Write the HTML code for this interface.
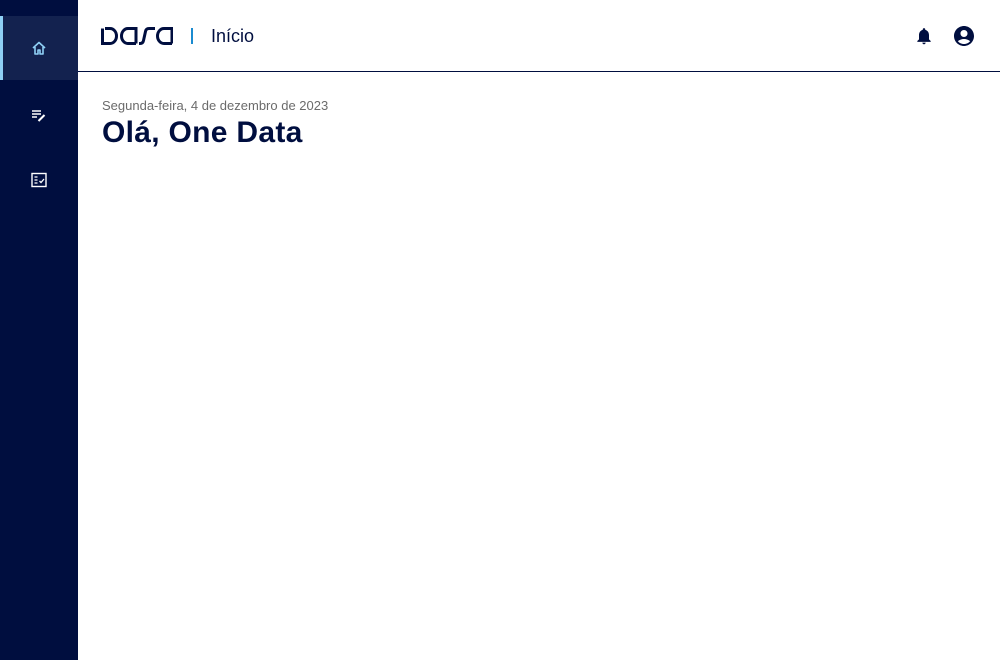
<!DOCTYPE html>
<html><head><meta charset="utf-8"><style>
*{margin:0;padding:0;box-sizing:border-box}
body{width:1000px;height:660px;background:#fff;font-family:"Liberation Sans",sans-serif;position:relative;overflow:hidden}
.side{position:absolute;left:0;top:0;width:78px;height:660px;background:#000e3f}
.act{position:absolute;left:0;top:16px;width:78px;height:64px;background:#13224f;border-left:3px solid #8fd0f5}
.hdr{position:absolute;left:78px;top:0;right:0;height:72px;border-bottom:1.5px solid #000e3f}
.ic{position:absolute}
</style></head><body>
<div class="side"></div>
<div class="act"></div>
<svg class="ic" style="left:31px;top:40px" width="16" height="16" viewBox="0 0 16 16"><path d="M2 8 L8 2.5 L14 8 M4 7 V14 H7 V10 H9 V14 H12 V7" fill="none" stroke="#8fd0f5" stroke-width="1.6" stroke-linejoin="round"/></svg>
<svg class="ic" style="left:31px;top:107px" width="16" height="16" viewBox="0 0 16 16"><path d="M1 4H10M1 7H10M1 10H6" stroke="#fff" stroke-width="1.5"/><path d="M7.5 14 L13.5 8" stroke="#fff" stroke-width="2"/></svg>
<svg class="ic" style="left:31px;top:172px" width="16" height="16" viewBox="0 0 16 16"><rect x="1" y="1.5" width="14" height="13" fill="none" stroke="#fff" stroke-width="1.4"/><path d="M3.5 5H6.5M3.5 8H6.5M3.5 11H6.5" stroke="#fff" stroke-width="1.2"/><path d="M8.5 9 L10 10.5 L13 7" fill="none" stroke="#fff" stroke-width="1.3"/></svg>
<div class="hdr"></div>
<svg class="ic" style="left:101px;top:27px" width="72" height="18" viewBox="0 0 72 18"><g fill="none" stroke="#000e3f" stroke-width="3"><path d="M1.5 1.5V16.5H9A6.5 7.5 0 0 0 9 1.5H4"/><path d="M35 16.5H27A6.5 7.5 0 0 1 27 1.5H35V16.5"/><path d="M54 1.5H48Q45 1.5 44.5 4.5L42.5 13.5Q42 16.5 39 16.5H38"/><path d="M71 16.5H63A6.5 7.5 0 0 1 63 1.5H71V16.5"/></g></svg>
<div style="position:absolute;left:191px;top:28px;width:2px;height:16px;background:#1b8bd0"></div>
<div style="position:absolute;left:211px;top:26px;font-size:18px;color:#000e3f">Início</div>
<svg class="ic" style="left:914px;top:26px" width="20" height="20" viewBox="0 0 24 24"><path fill="#000e3f" d="M12 22c1.1 0 2-.9 2-2h-4c0 1.1.9 2 2 2zm6-6v-5c0-3.070-1.64-5.64-4.5-6.32V4c0-.83-.67-1.5-1.5-1.5s-1.5.67-1.5 1.5v.68C7.63 5.36 6 7.92 6 11v5l-2 2v1h16v-1l-2-2z"/></svg>
<svg class="ic" style="left:952px;top:24px" width="24" height="24" viewBox="0 0 24 24"><path fill="#000e3f" d="M12 2C6.48 2 2 6.480 2 12s4.48 10 10 10 10-4.48 10-10S17.52 2 12 2zm0 4c1.93 0 3.5 1.57 3.5 3.5S13.93 13 12 13s-3.5-1.57-3.5-3.5S10.07 6 12 6zm0 14c-2.03 0-4.43-.82-6.14-2.88C7.550 15.8 9.68 15 12 15s4.45.8 6.14 2.12C16.43 19.18 14.03 20 12 20z"/></svg>
<div style="position:absolute;left:102px;top:98px;font-size:13px;color:#6b6b6b">Segunda-feira, 4 de dezembro de 2023</div>
<div style="position:absolute;left:102px;top:116px;font-size:30px;font-weight:bold;color:#000e3f;letter-spacing:0.3px">Olá, One Data</div>
</body></html>
